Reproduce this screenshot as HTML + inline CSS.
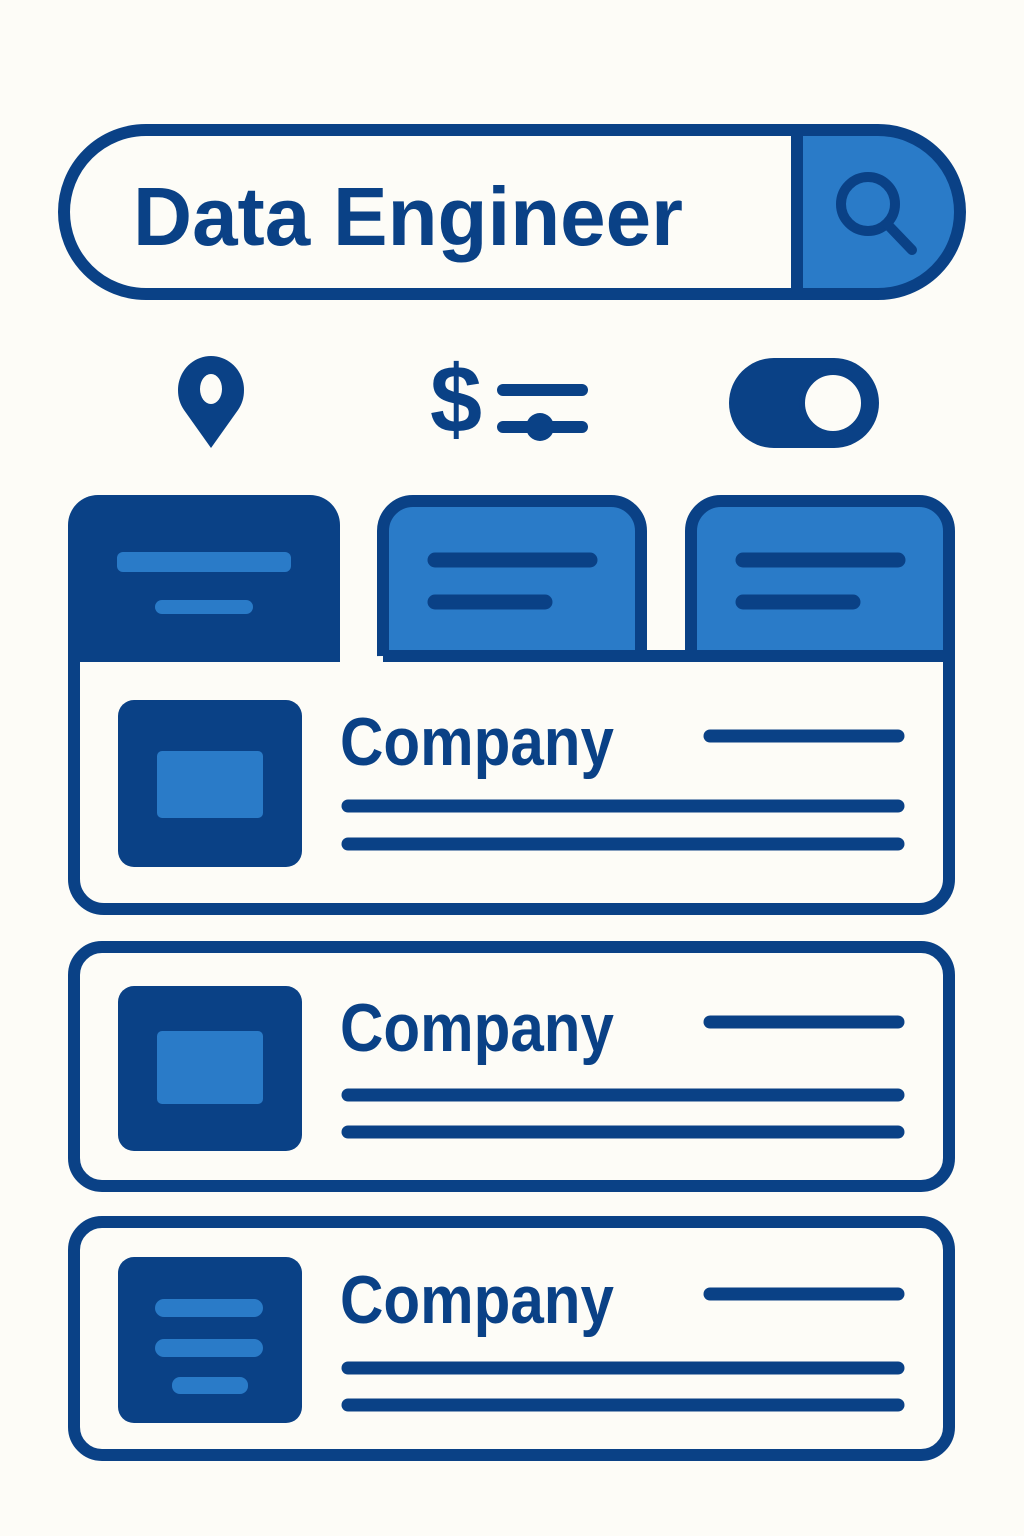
<!DOCTYPE html>
<html><head><meta charset="utf-8"><style>html,body{margin:0;padding:0;background:#fdfcf7}svg{display:block}</style></head>
<body>
<svg width="1024" height="1536" viewBox="0 0 1024 1536" xmlns="http://www.w3.org/2000/svg" font-family="Liberation Sans, sans-serif" font-weight="bold">
<rect width="1024" height="1536" fill="#fdfcf7"/>
<!-- search bar -->
<path d="M800 130 H878 A82 82 0 0 1 878 294 H800 Z" fill="#2a7bc8"/>
<rect x="64" y="130" width="896" height="164" rx="82" fill="none" stroke="#0a4186" stroke-width="12"/>
<line x1="797" y1="134" x2="797" y2="290" stroke="#0a4186" stroke-width="12"/>
<text x="133" y="245" font-size="83" fill="#0a4186" textLength="550" lengthAdjust="spacingAndGlyphs">Data Engineer</text>
<circle cx="868" cy="204" r="27" fill="none" stroke="#0a4186" stroke-width="10"/>
<line x1="888" y1="225" x2="912" y2="250" stroke="#0a4186" stroke-width="10" stroke-linecap="round"/>
<!-- pin -->
<path d="M211 356 C193 356 178 371 178 390 C178 398 180 404 184 410 L211 448 L238 410 C242 404 244 398 244 390 C244 371 229 356 211 356 Z" fill="#0a4186"/>
<ellipse cx="211" cy="389" rx="11" ry="15" fill="#fdfcf7"/>
<!-- dollar -->
<text x="430" y="432" font-size="96" fill="#0a4186" textLength="52" lengthAdjust="spacingAndGlyphs">$</text>
<line x1="503" y1="390" x2="582" y2="390" stroke="#0a4186" stroke-width="12" stroke-linecap="round"/>
<line x1="503" y1="427" x2="582" y2="427" stroke="#0a4186" stroke-width="12" stroke-linecap="round"/>
<circle cx="540" cy="427" r="14" fill="#0a4186"/>
<!-- toggle -->
<rect x="729" y="358" width="150" height="90" rx="45" fill="#0a4186"/>
<circle cx="833" cy="403" r="31" fill="#fdfcf7" stroke="#0a4186" stroke-width="6"/>
<!-- tabs -->
<path d="M68 662 V525 A30 30 0 0 1 98 495 H310 A30 30 0 0 1 340 525 V662 Z" fill="#0a4186"/>
<rect x="117" y="552" width="174" height="20" rx="6" fill="#2a7bc8"/>
<rect x="155" y="600" width="98" height="14" rx="7" fill="#2a7bc8"/>
<path d="M383 656 V531 A30 30 0 0 1 413 501 H611 A30 30 0 0 1 641 531 V656 Z" fill="#2a7bc8" stroke="#0a4186" stroke-width="12"/>
<line x1="435" y1="560" x2="590" y2="560" stroke="#0a4186" stroke-width="15" stroke-linecap="round"/>
<line x1="435" y1="602" x2="545" y2="602" stroke="#0a4186" stroke-width="15" stroke-linecap="round"/>
<path d="M691 656 V531 A30 30 0 0 1 721 501 H919 A30 30 0 0 1 949 531 V656 Z" fill="#2a7bc8" stroke="#0a4186" stroke-width="12"/>
<line x1="743" y1="560" x2="898" y2="560" stroke="#0a4186" stroke-width="15" stroke-linecap="round"/>
<line x1="743" y1="602" x2="853" y2="602" stroke="#0a4186" stroke-width="15" stroke-linecap="round"/>
<!-- card1 body -->
<path d="M74 662 V879 A30 30 0 0 0 104 909 H919 A30 30 0 0 0 949 879 V656 H383" fill="#fdfcf7" stroke="#0a4186" stroke-width="12"/>
<rect x="74" y="655" width="266" height="10" fill="#0a4186"/>
<rect x="80" y="662" width="260" height="6" fill="#fdfcf7"/>
<rect x="118" y="700" width="184" height="167" rx="16" fill="#0a4186"/>
<rect x="157" y="751" width="106" height="67" rx="5" fill="#2a7bc8"/>
<text x="340" y="765" font-size="68" fill="#0a4186" textLength="274" lengthAdjust="spacingAndGlyphs">Company</text>
<line x1="710" y1="736" x2="898" y2="736" stroke="#0a4186" stroke-width="13" stroke-linecap="round"/>
<line x1="348" y1="806" x2="898" y2="806" stroke="#0a4186" stroke-width="13" stroke-linecap="round"/>
<line x1="348" y1="844" x2="898" y2="844" stroke="#0a4186" stroke-width="13" stroke-linecap="round"/>
<!-- card2 -->
<rect x="74" y="947" width="875" height="239" rx="28" fill="none" stroke="#0a4186" stroke-width="12"/>
<rect x="118" y="986" width="184" height="165" rx="16" fill="#0a4186"/>
<rect x="157" y="1031" width="106" height="73" rx="5" fill="#2a7bc8"/>
<text x="340" y="1051" font-size="68" fill="#0a4186" textLength="274" lengthAdjust="spacingAndGlyphs">Company</text>
<line x1="710" y1="1022" x2="898" y2="1022" stroke="#0a4186" stroke-width="13" stroke-linecap="round"/>
<line x1="348" y1="1095" x2="898" y2="1095" stroke="#0a4186" stroke-width="13" stroke-linecap="round"/>
<line x1="348" y1="1132" x2="898" y2="1132" stroke="#0a4186" stroke-width="13" stroke-linecap="round"/>
<!-- card3 -->
<rect x="74" y="1222" width="875" height="233" rx="28" fill="none" stroke="#0a4186" stroke-width="12"/>
<rect x="118" y="1257" width="184" height="166" rx="16" fill="#0a4186"/>
<rect x="155" y="1299" width="108" height="18" rx="9" fill="#2a7bc8"/>
<rect x="155" y="1339" width="108" height="18" rx="9" fill="#2a7bc8"/>
<rect x="172" y="1377" width="76" height="17" rx="8" fill="#2a7bc8"/>
<text x="340" y="1323" font-size="68" fill="#0a4186" textLength="274" lengthAdjust="spacingAndGlyphs">Company</text>
<line x1="710" y1="1294" x2="898" y2="1294" stroke="#0a4186" stroke-width="13" stroke-linecap="round"/>
<line x1="348" y1="1368" x2="898" y2="1368" stroke="#0a4186" stroke-width="13" stroke-linecap="round"/>
<line x1="348" y1="1405" x2="898" y2="1405" stroke="#0a4186" stroke-width="13" stroke-linecap="round"/>
</svg>
</body></html>
